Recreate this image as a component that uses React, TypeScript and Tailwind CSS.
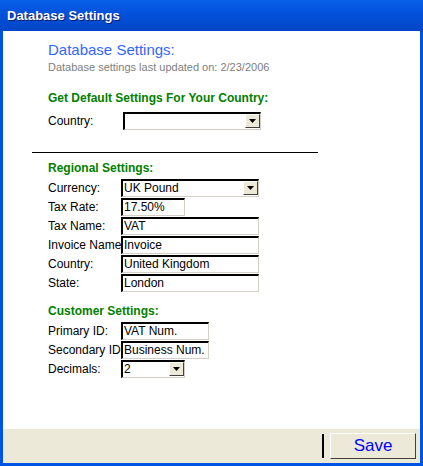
import React from "react";

const F = { fontFamily: '"Liberation Sans", Arial, sans-serif' };

function Input({ v, w, cursor }: { v: string; w: number; cursor?: boolean }) {
  return (
    <div className="h-[18px] bg-white border-t-2 border-l-2 border-t-black border-l-black border-r border-b border-r-[#d4d0c8] border-b-[#d4d0c8] text-[12px] leading-[14px] pl-[1px] text-black overflow-hidden whitespace-nowrap" style={{ width: w }}>
      {v}
    </div>
  );
}
function Select({ v, w }: { v: string; w: number }) {
  return (
    <div className="h-[18px] bg-white border-t-2 border-l-2 border-t-black border-l-black border-r border-b border-r-[#d4d0c8] border-b-[#d4d0c8] flex text-[12px] leading-[14px] text-black" style={{ width: w }}>
      <div className="flex-1 pl-[1px] overflow-hidden whitespace-nowrap">{v}</div>
      <div className="w-[15px] h-[14px] bg-[#ece9d8] border-r border-b border-r-[#404040] border-b-[#404040] border-l border-t border-l-white border-t-white flex items-center justify-center">
        <svg width="7" height="4" viewBox="0 0 7 4"><path d="M0 0h7L3.5 4z" fill="#000" /></svg>
      </div>
    </div>
  );
}
function Row({ label, children }: { label: string; children: React.ReactNode }) {
  return (
    <div className="flex items-center h-[19px]">
      <div className="w-[73px] text-[12px] text-black whitespace-nowrap">{label}</div>
      {children}
    </div>
  );
}

export default function App() {
  return (
    <div style={F} className="w-[423px] h-[466px] bg-[#0054e3] flex flex-col">
      <div className="h-[31px] bg-gradient-to-b from-[#0a5fe8] via-[#0350d8] to-[#0146c5] flex items-center pl-[7px] text-white font-bold text-[13px]" style={{ textShadow: "1px 1px #0a1a6a" }}>
        Database Settings
      </div>
      <div className="flex-1 mx-[3px] mb-[3px] bg-white flex flex-col">
        <div className="flex-1 pl-[45px] pt-[10px]">
          <div className="text-[15px] text-[#3366ff] leading-[18px]">Database Settings:</div>
          <div className="text-[11px] text-[#808080] leading-[14px] mt-[1px]">Database settings last updated on: 2/23/2006</div>
          <div className="text-[12px] font-bold text-[#008000] mt-[17px] leading-[14px]">Get Default Settings For Your Country:</div>
          <div className="mt-[6px] flex items-center h-[19px]">
            <div className="w-[75px] text-[12px] text-black">Country:</div>
            <Select v="" w={138} />
          </div>
          <div className="mt-[22px] -ml-[16px] w-[286px] h-px bg-black" />
          <div className="text-[12px] font-bold text-[#008000] mt-[8px] leading-[14px]">Regional Settings:</div>
          <div className="mt-[3px]">
            <Row label="Currency:"><Select v="UK Pound" w={138} /></Row>
            <Row label="Tax Rate:"><Input v="17.50%" w={64} /></Row>
            <Row label="Tax Name:"><Input v="VAT" w={138} /></Row>
            <Row label="Invoice Name:"><Input v="Invoice" w={138} /></Row>
            <Row label="Country:"><Input v="United Kingdom" w={138} /></Row>
            <Row label="State:"><Input v="London" w={138} /></Row>
          </div>
          <div className="text-[12px] font-bold text-[#008000] mt-[12px] leading-[14px]">Customer Settings:</div>
          <div className="mt-[3px]">
            <Row label="Primary ID:"><Input v="VAT Num." w={88} /></Row>
            <Row label="Secondary ID:"><Input v="Business Num." w={88} /></Row>
            <Row label="Decimals:"><Select v="2" w={64} /></Row>
          </div>
        </div>
        <div className="h-[34px] bg-[#ece9d8] flex items-center justify-end pr-[4px]">
          <div className="w-[2px] h-[24px] bg-black mr-[6px]" />
          <div className="w-[86px] h-[26px] bg-[#ece9d8] border border-t-white border-l-white border-r-[#404040] border-b-[#404040] flex items-center justify-center text-[#0000ff] text-[17px]">Save</div>
        </div>
      </div>
    </div>
  );
}
